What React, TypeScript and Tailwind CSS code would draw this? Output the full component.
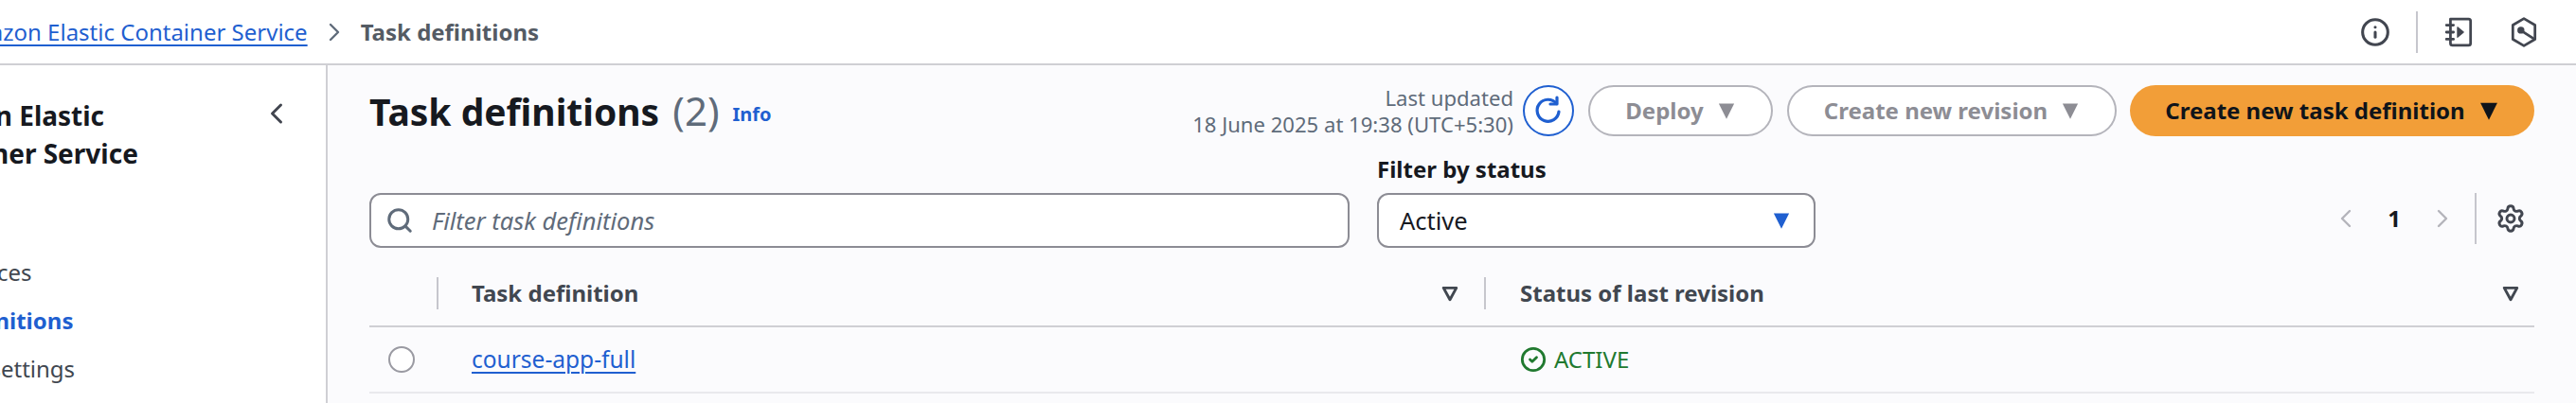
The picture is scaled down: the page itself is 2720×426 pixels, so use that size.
import React from "react";
import { Info, Search, Settings, ChevronLeft, ChevronRight, CircleCheck } from "lucide-react";

const Tri = ({ cls }: { cls: string }) => (
  <svg viewBox="0 0 16 16" className={cls} fill="currentColor"><path d="M1.5 2h13L8 15z" /></svg>
);

const SortTri = ({ cls }: { cls: string }) => (
  <svg viewBox="0 0 16 16" className={cls} fill="#fbfbfd" stroke="currentColor" strokeWidth="2.6" strokeLinejoin="round"><path d="M2 3h12L8 14z" /></svg>
);

const Notebook = () => (
  <svg viewBox="0 0 32 32" className="w-[34px] h-[34px] text-[#424650]" fill="none" stroke="currentColor" strokeWidth="2.6" strokeLinejoin="round" strokeLinecap="round">
    <path d="M7 3h18a2 2 0 0 1 2 2v22a2 2 0 0 1-2 2H9a2 2 0 0 1-2-2z" />
    <path d="M3 9h7M3 16h7M3 23h7" />
    <path d="M14 11l6 5-6 5z" fill="currentColor" strokeWidth="1" />
  </svg>
);

const Hex = () => (
  <svg viewBox="0 0 32 32" className="w-[34px] h-[34px] text-[#424650]" fill="none" stroke="currentColor" strokeWidth="2.6" strokeLinejoin="round" strokeLinecap="round">
    <path d="M16 2.500l11 6.500v14L16 29.500 5 23V9z" />
    <circle cx="13" cy="14" r="2.200" fill="currentColor" />
    <path d="M14 15l11 7" />
  </svg>
);

const Refresh = () => (
  <span className="w-[54px] h-[54px] rounded-full border-2 border-[#1f5fd0] bg-white flex items-center justify-center text-[#1f5fd0]">
    <svg viewBox="0 0 32 32" className="w-8 h-8" fill="none" stroke="currentColor" strokeWidth="3.2" strokeLinecap="round" strokeLinejoin="round">
      <path d="M24.500 8.500A11.500 11.500 0 1 0 27 17" />
      <path d="M25 2v7h-7" />
    </svg>
  </span>
);

const Pill = ({ label, w }: { label: string; w: string }) => (
  <span className={`h-[54px] rounded-full border-2 border-[#b4b4bb] bg-white flex items-center justify-center gap-[14px] text-[#8d8d94] font-bold text-[24px] ${w}`}>
    {label}
    <Tri cls="w-[20px] h-[20px] text-[#8d8d94]" />
  </span>
);

export default function App() {
  return (
    <div className="w-[2720px] h-[426px] overflow-hidden flex flex-col bg-white text-[#16191f] font-['Noto_Sans',sans-serif]">
      <header className="h-[69px] shrink-0 border-b-2 border-[#cfcfd4] flex items-center">
        <a className="ml-[-48px] text-[24px] text-[#1f5fd0] underline underline-offset-4 decoration-2 whitespace-nowrap">Amazon Elastic Container Service</a>
        <ChevronRight className="w-8 h-8 ml-[12px] mr-[12px] text-[#5f6b7a]" strokeWidth={1.8} />
        <span className="text-[24px] font-bold text-[#545b64]">Task definitions</span>
        <div className="ml-auto flex items-center pr-[38px]">
          <Info className="w-[32px] h-[32px] text-[#424650]" strokeWidth={2.3} />
          <span className="w-0.5 h-[44px] bg-[#c6c6cd] mx-[27px]" />
          <Notebook />
          <span className="ml-[34px]"><Hex /></span>
        </div>
      </header>
      <div className="flex flex-1 min-h-0">
        <aside className="w-[346px] shrink-0 border-r-2 border-[#cfcfd4] overflow-hidden">
          <div className="flex items-start pt-[33px] pr-[34px]">
            <h2 className="ml-[-100px] text-[28px] leading-[40px] font-bold whitespace-nowrap">Amazon Elastic<br />Container Service</h2>
            <ChevronLeft className="ml-auto w-9 h-9 text-[#424650]" strokeWidth={2} />
          </div>
          <nav className="mt-[89px] flex flex-col gap-[17px] text-[24px] leading-[34px] whitespace-nowrap">
            <a className="ml-[-58px] text-[#414750]">Services</a>
            <a className="ml-[-111px] font-bold text-[#1f5fd0]">Task definitions</a>
            <a className="ml-[-108px] text-[#414750]">Account settings</a>
          </nav>
        </aside>
        <main className="flex-1 bg-[#fbfbfd] pl-[44px] pr-[44px] min-w-0">
          <div className="h-[61px] mt-[17px] flex items-center">
            <h1 className="text-[39px] font-bold whitespace-nowrap">Task definitions <span className="ml-[4px] font-normal text-[42px] text-[#5f6b7a]">(2)</span></h1>
            <a className="ml-[14px] mt-[8px] text-[20px] font-bold text-[#1f5fd0]">Info</a>
            <div className="ml-auto flex items-center">
              <div className="text-right text-[22.100px] leading-[28px] text-[#5f6b7a] mr-[10px]">
                <div>Last updated</div>
                <div>18 June 2025 at 19:38 (UTC+5:30)</div>
              </div>
              <Refresh />
              <span className="ml-[15px]"><Pill label="Deploy" w="w-[195px]" /></span>
              <span className="ml-[15px]"><Pill label="Create new revision" w="w-[348px]" /></span>
              <span className="ml-[14px] h-[54px] w-[427px] rounded-full bg-[#f29e38] flex items-center justify-center gap-[14px] font-bold text-[24px] text-[#0f141a]">
                Create new task definition
                <Tri cls="w-[22px] h-[22px] text-[#0f141a]" />
              </span>
            </div>
          </div>
          <div className="flex items-end mt-[15px]">
            <div className="w-[1035px] h-[58px] rounded-[12px] border-2 border-[#8c8c94] bg-white flex items-center pl-[15px]">
              <Search className="w-[30px] h-[30px] text-[#5f6b7a]" strokeWidth={2.4} />
              <span className="ml-[19px] italic text-[25.500px] text-[#5f6b7a]">Filter task definitions</span>
            </div>
            <div className="ml-[29px] w-[463px]">
              <div className="text-[24px] leading-[34px] font-bold mb-[8px]">Filter by status</div>
              <div className="h-[58px] rounded-[12px] border-2 border-[#8c8c94] bg-white flex items-center justify-between pl-[22px] pr-[24px] text-[25.500px]">
                Active
                <Tri cls="w-[20px] h-[20px] text-[#1f5fd0]" />
              </div>
            </div>
            <div className="ml-auto h-[56px] flex items-center pb-[6px]">
              <ChevronLeft className="w-8 h-8 text-[#b4b4bb]" strokeWidth={1.8} />
              <span className="mx-[28px] text-[24px] font-bold">1</span>
              <ChevronRight className="w-8 h-8 text-[#b4b4bb]" strokeWidth={1.8} />
              <span className="ml-[18px] w-0.5 h-[54px] bg-[#c6c6cd]" />
              <Settings className="ml-[20px] w-[32px] h-[32px] text-[#424650]" strokeWidth={2.2} />
              <span className="w-[9px]" />
            </div>
          </div>
          <div className="mt-[14px] h-[70px] border-b-2 border-[#cfcfd4] flex items-center text-[24px] font-bold text-[#414750]">
            <span className="ml-[71px] w-0.5 h-[34px] bg-[#c6c6cd]" />
            <span className="ml-[35px] w-[1024px]">Task definition</span>
            <SortTri cls="w-[18px] h-[18px] text-[#414750]" />
            <span className="ml-[27px] w-0.5 h-[34px] bg-[#c6c6cd]" />
            <span className="ml-[36px] flex-1">Status of last revision</span>
            <SortTri cls="w-[18px] h-[18px] text-[#414750] mr-[16px]" />
          </div>
          <div className="h-[70px] border-b-2 border-[#e9e9ed] flex items-center text-[24px]">
            <span className="ml-[20px] w-[28px] h-[28px] rounded-full border-2 border-[#9a9aa2] bg-white" />
            <a className="ml-[60px] w-[1107px] text-[24.500px] text-[#1f5fd0] underline underline-offset-4 decoration-2">course-app-full</a>
            <span className="flex items-center gap-[8px] text-[#20792f]">
              <CircleCheck className="w-[28px] h-[28px]" strokeWidth={2.4} />
              ACTIVE
            </span>
          </div>
        </main>
      </div>
    </div>
  );
}
